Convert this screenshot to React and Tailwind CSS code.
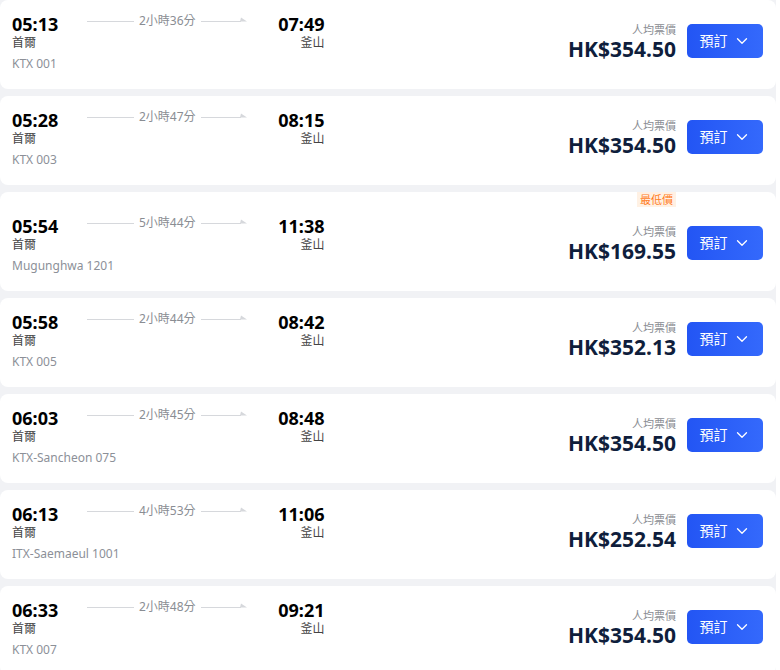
import React from 'react';
import { ChevronDown } from 'lucide-react';

const trains = [
  { dep: '05:13', arr: '07:49', dur: '2小時36分', no: 'KTX 001', price: 'HK$354.50' },
  { dep: '05:28', arr: '08:15', dur: '2小時47分', no: 'KTX 003', price: 'HK$354.50' },
  { dep: '05:54', arr: '11:38', dur: '5小時44分', no: 'Mugunghwa 1201', price: 'HK$169.55', cheapest: true },
  { dep: '05:58', arr: '08:42', dur: '2小時44分', no: 'KTX 005', price: 'HK$352.13' },
  { dep: '06:03', arr: '08:48', dur: '2小時45分', no: 'KTX-Sancheon 075', price: 'HK$354.50' },
  { dep: '06:13', arr: '11:06', dur: '4小時53分', no: 'ITX-Saemaeul 1001', price: 'HK$252.54' },
  { dep: '06:33', arr: '09:21', dur: '2小時48分', no: 'KTX 007', price: 'HK$354.50' },
];

const Duration = ({ text }) => (
  <div className="flex items-center w-[160px] ml-[29px] mr-[31px] h-[16px]">
    <div className="flex-1 h-px bg-[#d6d8dc]" />
    <span className="px-[5px] text-[12px] leading-[16px] text-[#8a8d93]">{text}</span>
    <div className="flex-1 flex items-center">
      <div className="flex-1 h-px bg-[#d6d8dc]" />
      <svg width="7" height="5" viewBox="0 0 7 5" className="-ml-px -mt-[3px]">
        <path d="M0 4.5 L7 4.5 L1 0.5 Z" fill="#d6d8dc" />
      </svg>
    </div>
  </div>
);

const TrainCard = ({ t }) => (
  <div className="bg-white rounded-lg flex flex-col">
    {t.cheapest && (
      <div className="flex justify-end pr-[100px] h-[10px]">
        <span className="h-[15px] px-[3px] bg-[#fff1e4] text-[#ff7d1f] text-[11px] leading-[15px]">
          最低價
        </span>
      </div>
    )}
    <div className="flex items-start justify-between h-[89px] pl-3 pr-[13px] pt-[14px]">
      <div>
        <div className="flex items-start">
          <div>
            <div className="text-[18px] leading-[20px] font-bold text-black">{t.dep}</div>
            <div className="mt-px text-[12px] leading-[16px] text-[#444]">首爾</div>
          </div>
          <div className="-mt-px">
            <Duration text={t.dur} />
          </div>
          <div className="text-right">
            <div className="text-[18px] leading-[20px] font-bold text-black">{t.arr}</div>
            <div className="mt-px text-[12px] leading-[16px] text-[#444]">釜山</div>
          </div>
        </div>
        <div className="mt-[5px] text-[12px] leading-[16px] text-[#8c9098]">{t.no}</div>
      </div>
      <div className="flex items-start gap-[11px] pt-[8px]">
        <div className="text-right mt-[1px]">
          <div className="text-[11px] leading-[14px] text-[#8a8d93]">人均票價</div>
          <div className="text-[21px] leading-[25px] font-bold text-[#0f1e3c]">{t.price}</div>
        </div>
        <button className="mt-[2px] w-[76px] h-[34px] rounded-[5px] bg-gradient-to-r from-[#2355f4] to-[#3469fc] text-white flex items-center justify-center gap-[5px]">
          <span className="text-[14px] leading-[18px]">預訂</span>
          <ChevronDown size={18} strokeWidth={1.75} />
        </button>
      </div>
    </div>
  </div>
);

export default function App() {
  return (
    <div className="min-h-screen bg-white font-['Noto_Sans','Noto_Sans_CJK_TC',sans-serif]">
      <div className="w-[776px] bg-[#f1f2f5] flex flex-col gap-[7px]">
        {trains.map((t) => (
          <TrainCard key={t.no} t={t} />
        ))}
      </div>
    </div>
  );
}
